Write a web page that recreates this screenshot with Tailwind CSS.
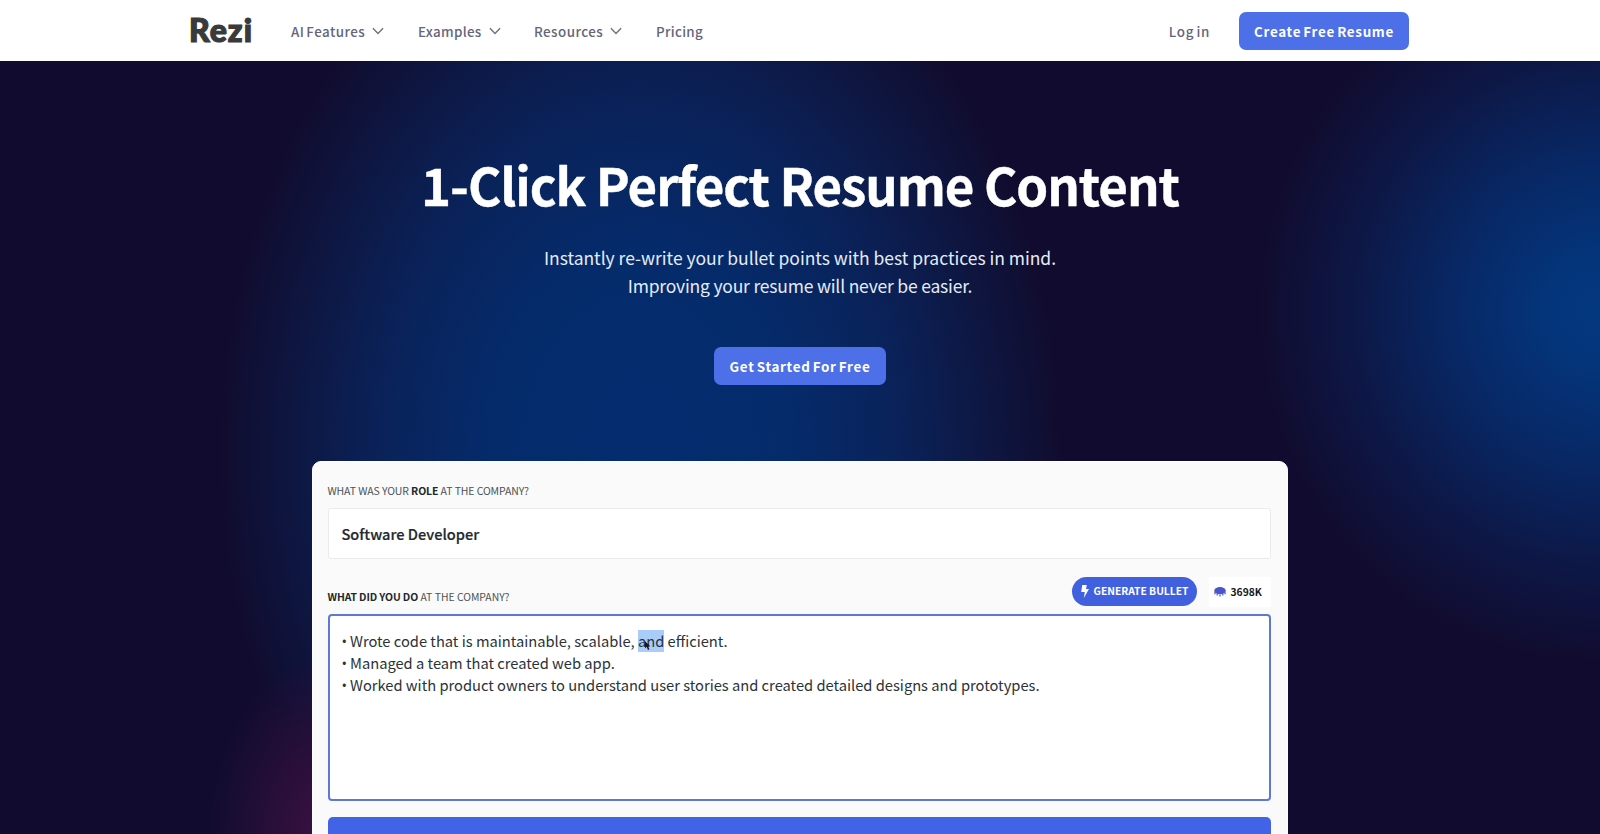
<!DOCTYPE html>
<html lang="en">
<head>
<meta charset="utf-8">
<title>Rezi – 1-Click Perfect Resume Content</title>
<script src="https://cdn.jsdelivr.net/npm/@tailwindcss/browser@4"></script>
</head>
<body class="h-[834px] w-[1600px] overflow-hidden bg-[#110c2f] font-['Noto_Sans_CJK_SC',sans-serif]">
<div class="flex h-[834px] flex-col overflow-hidden">
  <header class="flex h-[61px] shrink-0 items-center bg-white pl-[189px] pr-[191px] text-[13.4px] font-medium leading-5 tracking-[0.45px] text-[#64657b] [word-spacing:-1.5px]">
    <a class="mr-[40px] w-[62px] whitespace-nowrap pb-[2px] font-[Lato] text-[32px] font-black leading-8 tracking-[1px] text-[#3a3a3a] [-webkit-text-stroke:1.2px_#3a3a3a]">Rezi</a>
    <nav class="flex items-center whitespace-nowrap">
      <a class="flex w-[127px] items-center gap-[7px]"><span>AI Features</span>
        <svg class="h-[8px] w-[12px]" viewBox="0 0 13 8" fill="none" stroke="#73737b" stroke-width="1.6"><path d="M1 1l5.5 5.6L12 1"/></svg></a>
      <a class="flex w-[116px] items-center gap-[7px]"><span class="tracking-[0.3px]">Examples</span>
        <svg class="h-[8px] w-[12px]" viewBox="0 0 13 8" fill="none" stroke="#73737b" stroke-width="1.6"><path d="M1 1l5.5 5.6L12 1"/></svg></a>
      <a class="flex w-[122px] items-center gap-[7px]"><span>Resources</span>
        <svg class="h-[8px] w-[12px]" viewBox="0 0 13 8" fill="none" stroke="#73737b" stroke-width="1.6"><path d="M1 1l5.5 5.6L12 1"/></svg></a>
      <a class="tracking-[0.3px]">Pricing</a>
    </nav>
    <div class="ml-auto flex items-center gap-[29px] whitespace-nowrap">
      <a class="tracking-[0.7px]">Log in</a>
      <a class="flex h-[38px] w-[170px] items-center justify-center rounded-[7px] bg-[#4d6fe8] font-bold tracking-[0.7px] text-white">Create Free Resume</a>
    </div>
  </header>
  <main class="flex grow flex-col items-center bg-[radial-gradient(ellipse_340px_350px_at_1600px_250px,#03387f_0%,#04357b_15%,#082763_45%,#0d1847_72%,transparent_100%),radial-gradient(ellipse_120px_180px_at_330px_774px,#3c1144_0%,#2a0f3a_45%,transparent_100%),radial-gradient(ellipse_420px_560px_at_640px_390px,#042c6e_0%,#052b6b_35%,#0a2259_62%,#0e1640_84%,transparent_100%)]">
    <h1 class="mt-[85px] whitespace-nowrap text-[51px] font-bold leading-[76px] tracking-[-1.05px] text-white [-webkit-text-stroke:0.4px_#fff]">1-Click Perfect Resume Content</h1>
    <p class="mt-[21.5px] whitespace-nowrap text-center text-[17.5px] leading-[28.6px] text-[#e4ecf8]"><span class="tracking-[-0.03px]">Instantly re-write your bullet points with best practices in mind.</span><br><span class="tracking-[-0.2px]">Improving your resume will never be easier.</span></p>
    <a class="mt-[46px] flex h-[38px] w-[172px] shrink-0 items-center justify-center whitespace-nowrap rounded-[7px] bg-[#4d6fe8] text-[13.4px] font-bold tracking-[0.7px] text-white [word-spacing:-1.5px]">Get Started For Free</a>
    <section class="mt-[76px] flex h-[420px] w-[976px] shrink-0 flex-col rounded-t-[9px] border border-white bg-[#fafafa] pl-[14.5px] pr-[16.5px] text-[#2b3338]">
      <div class="mt-[20px] whitespace-pre text-[10.5px] leading-[18px] tracking-[-0.12px] text-[#4c5256]">WHAT WAS YOUR <b class="text-[#20282e]">ROLE</b> AT THE COMPANY?</div>
      <div class="mt-[8px] flex h-[51px] items-center rounded-[3px] border border-[#ebebec] bg-white pl-[13px] pt-px text-[14.6px] font-medium text-[#1f2a30] [-webkit-text-stroke:0.2px_#1f2a30]">Software Developer</div>
      <div class="mt-[18px] flex h-[30px]">
        <div class="mt-[11px] whitespace-pre text-[10.4px] leading-[18px] text-[#4c5256]"><b class="tracking-[-0.1px] text-[#20282e]">WHAT DID YOU DO</b> AT THE COMPANY?</div>
        <div class="ml-auto flex h-[29px] w-[125px] items-center whitespace-nowrap rounded-full bg-[#4160e0] pl-[9px] text-[10.3px] font-bold text-white">
          <svg class="mr-[5px] h-[13px] w-[8px]" viewBox="0 0 8 13" fill="#fff"><path d="M1.2 0h4.6L5 4h3L2.8 13l1-6H.2z"/></svg>GENERATE BULLET</div>
        <div class="ml-[12px] flex h-[30px] w-[62px] items-center bg-white pl-[5px] text-[10.3px] font-bold text-[#15181c]">
          <svg class="mr-[5px] h-[10px] w-[12px]" viewBox="0 0 12 10" fill="#4b55c8"><ellipse cx="6" cy="3.7" rx="5.8" ry="3.6"/><g stroke="#4b55c8" stroke-width="1.2"><path d="M.9 5.2v2M3.2 6.8v1.8M6 7.4v2M8.8 6.8v1.8M11.1 5.2v2"/></g></svg>3698K</div>
      </div>
      <div class="mt-[7px] h-[187px] shrink-0 rounded-[4px] border-2 border-[#5f78d2] bg-white pl-[12px] pt-[14px] text-[14.7px] leading-[22px] text-[#2b3338]">
        <div class="flex whitespace-pre"><span class="w-[8.5px] font-['Open_Sans']">•</span><span>Wrote code that is maintainable, scalable, </span><span class="relative bg-[#a9ccf8]">and<svg class="absolute left-[7px] top-[11px] h-[10px] w-[7px]" viewBox="0 0 8 11"><path d="M0 0v8l2-1.6L3.4 10l1.6-.7-1.5-3.4H6z" fill="#15181c"/></svg></span><span> efficient.</span></div>
        <div class="flex whitespace-pre"><span class="w-[8.5px] font-['Open_Sans']">•</span><span>Managed a team that created web app.</span></div>
        <div class="flex whitespace-pre"><span class="w-[8.5px] font-['Open_Sans']">•</span><span>Worked with product owners to understand user stories and created detailed designs and prototypes.</span></div>
      </div>
      <div class="mt-[16px] h-[48px] shrink-0 rounded-[5px] bg-[#4263e6]"></div>
    </section>
  </main>
</div>
</body>
</html>
